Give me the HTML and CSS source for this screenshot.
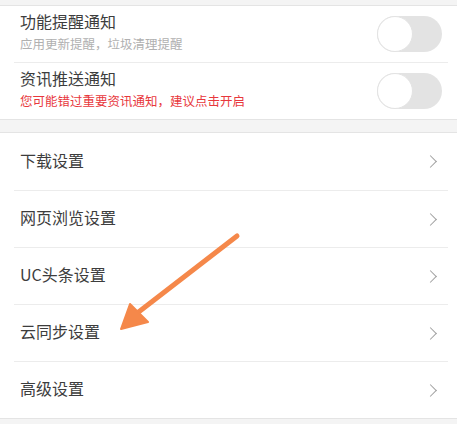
FILE: index.html
```html
<!DOCTYPE html>
<html lang="zh-CN">
<head>
    <meta charset="UTF-8">
    <meta name="viewport" content="width=device-width, initial-scale=1.0">
    <title>设置</title>
    <link rel="stylesheet" href="styles.css">
</head>
<body>
    <div class="page">
        <!-- Notification switches -->
        <div class="section">
            <div class="switch-row">
                <div class="switch-text">
                    <div class="title">功能提醒通知</div>
                    <div class="sub">应用更新提醒，垃圾清理提醒</div>
                </div>
                <div class="toggle"><span class="knob"></span></div>
            </div>
            <div class="switch-row">
                <div class="switch-text">
                    <div class="title">资讯推送通知</div>
                    <div class="sub warn">您可能错过重要资讯通知，建议点击开启</div>
                </div>
                <div class="toggle"><span class="knob"></span></div>
            </div>
        </div>

        <!-- Setting entries -->
        <div class="section list">
            <div class="list-row"><span class="title">下载设置</span><span class="chevron"></span></div>
            <div class="list-row"><span class="title">网页浏览设置</span><span class="chevron"></span></div>
            <div class="list-row"><span class="title">UC头条设置</span><span class="chevron"></span></div>
            <div class="list-row"><span class="title">云同步设置</span><span class="chevron"></span></div>
            <div class="list-row"><span class="title">高级设置</span><span class="chevron"></span></div>
        </div>

        <!-- annotation arrow -->
        <svg class="arrow" width="457" height="424" viewBox="0 0 457 424">
            <line x1="237" y1="236" x2="136" y2="314" stroke="#f5884a" stroke-width="5" stroke-linecap="round"/>
            <polygon points="121,329 130,304 148,322" fill="#f5884a" stroke="#f5884a" stroke-width="2" stroke-linejoin="round"/>
        </svg>
    </div>
</body>
</html>
```

FILE: styles.css
```css
body {
    margin: 0;
    padding: 0;
    background-color: #f4f4f4;
    font-family: "Noto Sans CJK SC", "Noto Sans", sans-serif;
}

.page {
    position: relative;
    width: 457px;
    height: 424px;
    padding-top: 5px;
    box-sizing: border-box;
    overflow: hidden;
}

.section {
    background-color: #fff;
    border-top: 1px solid #e4e4e4;
    border-bottom: 1px solid #e4e4e4;
}

.list {
    margin-top: 12px;
}

.switch-row {
    display: flex;
    align-items: center;
    justify-content: space-between;
    height: 56px;
    margin-left: 14px;
    margin-right: 9px;
    padding-left: 6px;
    box-sizing: border-box;
}

.switch-row + .switch-row {
    border-top: 1px solid #ececec;
    height: 57px;
}

.switch-text {
    display: flex;
    flex-direction: column;
    gap: 5px;
    margin-top: -5px;
}

.title {
    font-size: 16px;
    line-height: 20px;
    color: #3d3d3d;
}

.sub {
    font-size: 12.5px;
    line-height: 16px;
    color: #b0b0b0;
}

.sub.warn {
    color: #e8383d;
}

.toggle {
    width: 65px;
    height: 36px;
    border-radius: 18px;
    background-color: #e3e3e3;
    margin-right: 6px;
    position: relative;
    flex-shrink: 0;
}

.knob {
    position: absolute;
    left: 0;
    top: 0;
    width: 34px;
    height: 34px;
    border-radius: 50%;
    background-color: #fff;
    border: 1px solid #e3e3e3;
}

.list-row {
    display: flex;
    align-items: center;
    justify-content: space-between;
    height: 57px;
    margin-left: 14px;
    margin-right: 9px;
    padding-left: 6px;
    padding-right: 13px;
    padding-bottom: 4px;
    box-sizing: border-box;
}

.list-row + .list-row {
    border-top: 1px solid #ececec;
}

.chevron {
    width: 8px;
    height: 8px;
    margin-top: 4px;
    border-top: 1px solid #a0a0a0;
    border-right: 1px solid #a0a0a0;
    transform: rotate(45deg);
}

.arrow {
    position: absolute;
    left: 0;
    top: 0;
    pointer-events: none;
}
```
